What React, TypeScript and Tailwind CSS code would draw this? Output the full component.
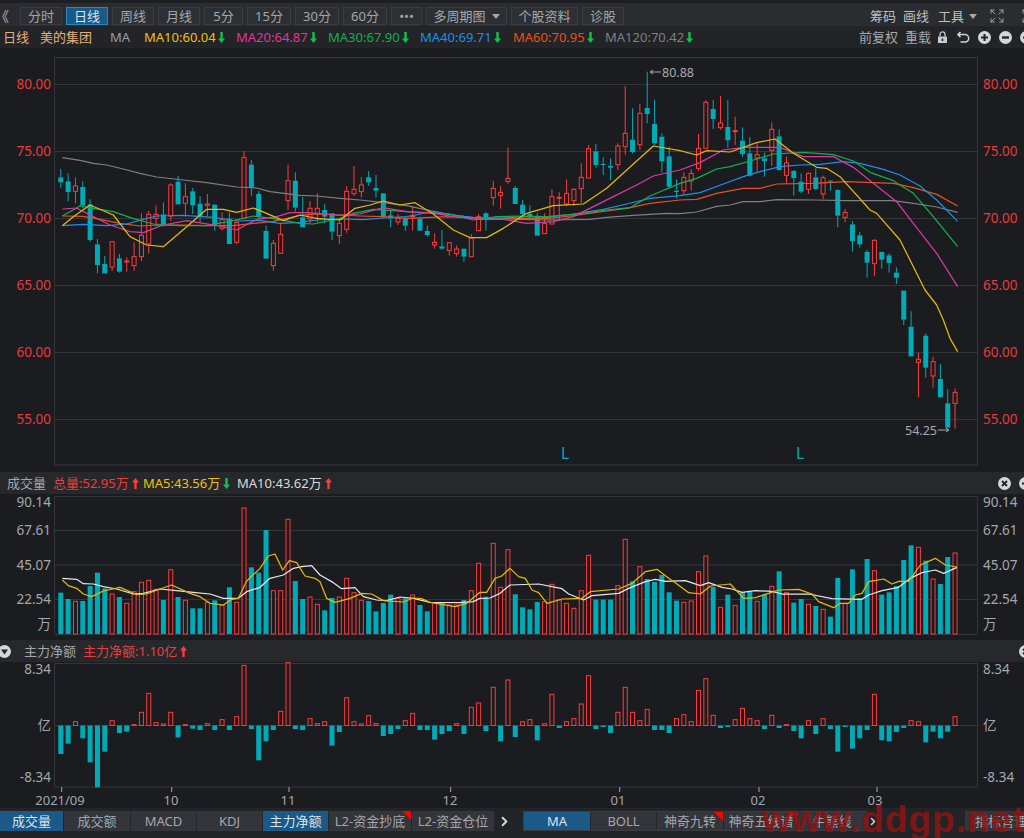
import { ChevronRight, Expand } from "lucide-react";

const RED = "#ff3b3b";
const TEAL = "#00abb8";
const GRID = "#33353a";
const ORANGE = "#e8501e";

type Pt = [number, number];

// x位置
const barX = (i: number) => 60.8 + 7.33 * i;
// 拡大図の座標から画面座標へ
const toY = (z: number) => 60 + z / 3;
const seg = (x0: number, pts: Pt[]) => pts.map(([x, y]) => `${x0 + x / 3},${toY(y)}`).join(" ");

// [赤なら1, 上ヒゲ, 実体上, 実体下, 下ヒゲ]
const candles: number[][] = [
  [0,327,352,367,383],[0,340,364,396,424],[1,352,378,394,430],[0,364,381,437,445],[0,418,433,540,545],[0,537,553,615,640],[0,588,612,640,640],[1,545,545,621,633],[0,582,595,635,638],[1,592,603,606,635],
  [1,547,590,617,633],[1,460,526,590,603],[1,453,463,552,581],[1,436,463,475,500],[0,427,463,495,500],[1,370,375,468,483],[0,348,365,433,433],[1,370,410,430,470],[0,384,394,436,462],[0,408,431,470,487],
  [1,402,432,436,470],[0,433,434,495,512],[1,457,479,505,512],[0,458,476,552,552],[1,483,488,547,552],[1,273,293,475,475],[0,300,314,381,407],[0,393,402,470,475],[0,497,513,596,596],[1,540,550,617,632],
  [1,490,523,580,580],[1,314,362,422,450],[0,337,362,443,455],[0,411,472,502,502],[1,423,445,477,490],[1,400,445,460,487],[0,433,450,470,490],[0,460,460,515,540],[1,475,490,527,552],[1,378,394,508,518],
  [1,318,388,401,408],[1,352,375,395,412],[0,333,352,367,377],[0,345,384,392,412],[0,400,400,470,475],[0,450,466,475,502],[1,462,476,486,495],[0,470,477,497,513],[1,440,467,470,512],[0,470,476,512,512],
  [0,496,513,525,530],[1,520,547,555,566],[0,510,559,566,570],[1,547,548,571,587],[1,557,567,581,590],[0,566,566,590,605],[1,522,534,590,590],[1,462,470,512,512],[0,457,460,472,512],[1,362,385,413,437],
  [1,378,397,406,446],[1,262,355,365,371],[0,378,384,432,432],[0,420,434,462,468],[0,436,462,470,478],[0,460,470,527,527],[1,460,490,521,521],[1,388,410,492,492],[1,397,412,415,480],[1,358,400,432,438],
  [1,385,388,422,438],[1,310,352,386,430],[1,255,266,354,354],[0,252,274,315,323],[0,292,312,315,345],[0,295,318,323,360],[1,250,258,314,330],[1,78,220,260,284],[0,145,239,276,280],[1,132,160,254,270],
  [0,35,144,162,190],[0,120,192,250,255],[0,220,230,304,338],[0,260,289,380,385],[0,358,392,396,416],[1,337,352,392,405],[1,327,340,363,392],[1,222,265,325,332],[1,120,127,265,265],[0,120,147,177,207],
  [1,108,189,203,209],[0,120,201,241,263],[1,170,212,215,255],[0,202,242,282,290],[0,232,280,347,350],[1,250,284,294,335],[0,278,295,303,350],[1,188,208,272,318],[0,208,229,330,332],[1,290,309,346,372],
  [0,330,333,354,407],[0,340,365,395,400],[1,338,340,388,402],[0,325,352,387,390],[1,347,353,402,418],[0,360,362,365,392],[0,388,390,467,502],[1,447,457,472,487],[0,483,493,543,575],[0,516,526,553,563],
  [0,570,576,608,653],[1,538,541,611,648],[0,575,576,599,626],[0,580,586,609,638],[0,622,638,653,672],[0,692,692,779,795],[0,754,800,889,889],[1,878,898,907,1012],[0,820,827,923,953],[1,890,905,948,983],
  [0,912,957,1012,1012],[0,988,1030,1103,1105],[1,985,997,1030,1106],
];

// 棒の上端 (負は赤)
const volumes = [
  368,387,-394,393,348,308,355,-372,381,-400,-365,-337,-331,-358,390,-299,381,-391,415,415,
  -397,391,-406,352,-397,-114,292,308,180,-362,-362,-148,333,387,-381,-403,421,384,-381,-325,
  -368,-391,393,424,399,374,-385,385,-375,405,424,-398,398,-405,-405,390,-362,-280,380,-220,
  -352,-239,373,412,418,396,-395,-343,-390,-400,-415,-362,-256,389,389,389,-347,-208,334,-290,
  327,336,315,367,392,-397,-393,-305,-258,351,-412,374,-406,367,364,-394,374,-349,304,-368,
  398,387,-403,408,-418,440,324,-400,298,385,267,-302,374,367,348,270,226,-232,272,-327,
  342,261,-249,
];

const netAmounts = [
  342,311,-245,295,367,442,335,-242,279,275,-254,-217,-160,-248,-252,-217,292,-254,266,270,
  -251,270,-239,270,-230,-76,267,361,304,270,-214,-68,267,270,-236,-251,-245,317,276,-173,
  -245,-252,-227,-251,288,282,267,-242,-220,270,270,299,282,273,-251,282,-202,-189,273,-142,
  304,-120,291,-245,-239,301,-251,-163,264,-245,-236,-192,-107,267,261,279,-217,-142,-217,-242,
  -208,270,270,279,-236,-224,-245,-151,-116,-226,264,261,-239,-205,-236,-242,267,-226,264,-254,
  273,295,-242,282,-236,267,335,261,326,295,270,-163,301,304,276,264,-242,-245,307,275,
  295,275,-230,
];

const ma120 = [
  seg(0, [[187,293],[240,301],[280,310],[320,315],[370,327],[420,340],[470,351],[550,360],[620,368],[710,381],[770,384],[810,395],[900,406],[950,408],[1020,415]]),
  seg(340, [[60,420],[130,428],[200,437],[270,452],[340,465],[400,473],[470,476],[540,478],[620,480],[750,478],[800,472],[880,466],[980,460],[1020,461]]),
  seg(680, [[50,456],[110,439],[150,435],[190,425],[240,425],[290,419],[400,420],[500,422],[640,422],[700,430],[770,441],[833,457]]),
].join(" ");
const ma60 = [
  seg(0, [[187,468],[250,469],[300,478],[360,490],[420,498],[470,495],[550,495],[620,497],[700,497],[760,490],[820,484],[900,466],[950,462],[1020,465]]),
  seg(340, [[60,468],[130,470],[200,475],[270,472],[330,470],[400,474],[470,474],[540,475],[620,476],[700,467],[790,454],[860,445],[930,430],[1020,420]]),
  seg(680, [[50,418],[110,400],[190,385],[240,385],[290,372],[400,370],[500,365],[640,370],[700,383],[770,403],[833,438]]),
].join(" ");
const ma40 = [
  seg(0, [[187,497],[250,493],[320,497],[380,492],[430,478],[470,468],[550,466],[640,472],[710,483],[780,481],[840,490],[900,487],[950,480],[1020,477]]),
  seg(340, [[70,479],[130,474],[200,470],[270,456],[340,465],[420,475],[490,474],[560,470],[620,472],[700,462],[790,448],[860,432],[930,415],[1020,407]]),
  seg(680, [[60,398],[130,372],[190,350],[240,335],[300,320],[360,315],[420,313],[490,305],[540,310],[610,328],[660,345],[720,378],[770,420],[833,484]]),
].join(" ");
const ma30 = [
  seg(0, [[187,468],[240,438],[280,445],[340,455],[400,476],[460,492],[540,497],[620,497],[700,482],[760,468],[820,476],[900,490],[940,492],[1020,475]]),
  seg(340, [[40,460],[100,448],[160,452],[240,458],[330,462],[400,480],[470,470],[540,468],[620,470],[700,463],[800,450],[870,443],[930,408],[1020,370]]),
  seg(680, [[50,355],[110,327],[150,320],[210,303],[280,282],[370,277],[460,284],[520,303],[570,337],[640,362],[700,400],[760,470],[833,560]]),
].join(" ");
const ma20 = [
  seg(0, [[187,447],[230,444],[280,470],[330,495],[390,515],[430,518],[490,495],[560,482],[610,490],[660,498],[710,510],[770,478],[830,470],[870,458],[920,458],[1020,466]]),
  seg(340, [[60,462],[130,443],[200,455],[270,458],[340,470],[420,478],[490,478],[560,490],[640,485],[700,470],[760,440],[820,410],[890,375],[940,348],[1020,330]]),
  seg(680, [[60,308],[130,270],[190,262],[300,262],[370,290],[460,290],[520,322],[580,370],[650,425],[700,490],[770,580],[833,680]]),
].join(" ");
const ma10 = [
  seg(0, [[187,497],[220,470],[270,435],[340,465],[390,530],[440,555],[490,560],[560,500],[620,448],[670,448],[710,457],[760,444],[800,460],[850,482],[900,465],[950,475],[1020,480]]),
  seg(340, [[45,445],[90,435],[130,423],[180,435],[225,428],[280,462],[340,510],[390,533],[440,533],[490,505],[560,460],[640,437],[730,432],[800,385],[880,312],[940,258],[1020,272]]),
  seg(680, [[50,285],[80,272],[150,276],[230,248],[285,237],[340,280],[410,322],[440,325],[480,350],[570,450],[590,460],[660,540],[735,690]]),
  seg(780, [[470,735],[490,780],[510,835],[533,875]]),
].join(" ");

// 出来高の移動平均 (y = 470 + z / 3)
const volSeg = (x0: number, pts: Pt[]) => pts.map(([x, y]) => `${x0 + x / 3},${470 + y / 3}`).join(" ");
const volWhite = [
  volSeg(0, [[187,325],[230,328],[250,341],[280,342],[310,350],[350,357],[400,372],[430,370],[480,357],[530,362],[580,367],[630,372],[670,385],[715,385],[740,365],[780,352],[810,325],[850,315],[880,295],[905,290],[935,287],[960,315],[1000,338],[1025,356],[1065,353],[1090,380],[1130,390],[1160,392],[1200,381],[1240,385],[1290,397],[1380,398],[1420,395],[1440,385],[1470,384],[1500,370],[1530,345]]),
  volSeg(512, [[80,342],[150,356],[170,372],[215,390],[240,377],[320,370],[350,355],[400,335],[430,328],[460,334],[520,332],[565,347],[590,338],[630,352],[660,357],[690,367],[730,362],[780,364],[810,372],[890,372],[960,386],[1050,388],[1070,375],[1110,362],[1160,352],[1195,325],[1230,308],[1270,300],[1295,310],[1335,292]]),
].join(" ");
const volYellow = [
  volSeg(0, [[187,330],[205,347],[230,355],[250,372],[275,380],[310,363],[360,352],[410,374],[440,372],[480,357],[515,345],[570,370],[600,380],[630,400],[670,405],[695,388],[715,385],[740,333],[780,295],[805,258],[825,252],[848,300],[868,272],[890,278],[915,318],[945,325],[960,335],[980,385],[1005,397],[1050,385],[1085,370],[1115,372],[1150,392],[1210,396],[1240,384],[1265,386],[1290,397],[1365,410],[1400,400],[1440,367],[1460,367],[1485,325],[1505,318],[1530,295]]),
  volSeg(512, [[20,320],[40,325],[60,360],[80,368],[105,400],[150,387],[210,385],[235,365],[320,357],[360,340],[400,305],[435,298],[470,325],[490,338],[530,368],[565,372],[595,348],[655,342],[695,385],[730,383],[800,360],[860,358],[900,372],[920,395],[965,413],[985,400],[1010,400],[1030,375],[1050,370],[1070,335],[1115,327],[1140,342],[1160,334],[1190,334],[1225,285],[1270,265],[1300,285],[1335,291]]),
].join(" ");

const toolButtons = [
  { label: "分时", w: "w-[42px]" },
  { label: "日线", w: "w-[42px]", active: true },
  { label: "周线", w: "w-[42px]" },
  { label: "月线", w: "w-[42px]" },
  { label: "5分", w: "w-[39px]" },
  { label: "15分", w: "w-[44px]" },
  { label: "30分", w: "w-[44px]" },
  { label: "60分", w: "w-[44px]" },
  { label: "•••", w: "w-[31px]" },
];

const maLabels = [
  { text: "MA10:60.04", color: "text-[#f2c200]", w: "w-[92px]" },
  { text: "MA20:64.87", color: "text-[#e2339c]", w: "w-[92px]" },
  { text: "MA30:67.90", color: "text-[#12b04f]", w: "w-[92px]" },
  { text: "MA40:69.71", color: "text-[#1c8fe6]", w: "w-[93px]" },
  { text: "MA60:70.95", color: "text-[#e8501e]", w: "w-[92px]" },
];

const leftTabs = [
  { label: "成交量", w: "w-[64px]", active: true },
  { label: "成交额", w: "w-[67px]" },
  { label: "MACD", w: "w-[66px]" },
  { label: "KDJ", w: "w-[66px]" },
  { label: "主力净额", w: "w-[66px]", active: true },
  { label: "L2-资金抄底", w: "w-[83px]", flag: true },
  { label: "L2-资金仓位", w: "w-[83px]" },
];

const rightTabs = [
  { label: "MA", w: "w-[67px]", active: true },
  { label: "BOLL", w: "w-[66px]" },
  { label: "神奇九转", w: "w-[67px]", flag: true },
  { label: "神奇五线谱", w: "w-[75px]", flag: true },
  { label: "牛熊线", w: "w-[67px]" },
];

const Arrow = ({ up, className }: { up?: boolean; className?: string }) => (
  <svg width="7" height="11" viewBox="0 0 7 11" className={className}>
    <path d={up ? "M3.5 0 L7 4.5 H4.7 V11 H2.3 V4.5 H0 Z" : "M2.3 0 H4.7 V6.5 H7 L3.5 11 L0 6.5 H2.3 Z"} fill={up ? RED : "#12c050"} />
  </svg>
);

const CircleIcon = ({ type }: { type: "plus" | "minus" | "close" | "down" }) => (
  <svg width="13" height="13" viewBox="0 0 13 13" className="shrink-0">
    <circle cx="6.5" cy="6.5" r="6.5" fill="#d4d6d8" />
    {type === "plus" && <path d="M6.5 3 V10 M3 6.5 H10" stroke="#222427" strokeWidth="2" />}
    {type === "minus" && <path d="M3 6.5 H10" stroke="#222427" strokeWidth="2.4" />}
    {type === "close" && <path d="M4 4 L9 9 M9 4 L4 9" stroke="#222427" strokeWidth="1.8" />}
    {type === "down" && <path d="M3 4.5 H10 L6.5 9.5 Z" fill="#222427" />}
  </svg>
);

const GridLines = ({ ys }: { ys: number[] }) => (
  <>
    {ys.map((y) => (
      <line key={y} x1={54.5} x2={977.5} y1={y} y2={y} stroke={GRID} />
    ))}
  </>
);

const AxisText = ({ y, text, fill }: { y: number; text: string; fill: string }) => (
  <>
    <text x={51} y={y + 4.5} textAnchor="end" fontSize="13.5" fill={fill}>{text}</text>
    <text x={983} y={y + 4.5} fontSize="13.5" fill={fill}>{text}</text>
  </>
);

const Tab = ({ label, w, active, flag }: { label: string; w: string; active?: boolean; flag?: boolean }) => (
  <div
    className={`relative flex h-full shrink-0 items-center justify-center border-r border-[#24262a] ${w} ${
      active ? "bg-[#1b5a88] text-[#d8e4ee]" : "bg-[#33353a] text-[#a4a7ab]"
    }`}
  >
    {label}
    {flag && <span className="absolute right-0 top-0 h-0 w-0 border-l-[9px] border-t-[9px] border-l-transparent border-t-[#ff0000]" />}
  </div>
);

export default function App() {
  return (
    <div className="relative h-[838px] w-[1024px] overflow-hidden bg-[#1b1c20] font-['Noto_Sans','Noto_Sans_CJK_SC',sans-serif] text-[13px] leading-none text-[#a4a7ab]">
      {/* ツールバー */}
      <div className="flex h-[26px] items-start border-t-[3px] border-[#1e1f22] bg-[#2a2c30] pt-[4px]">
        <div className="ml-[-5px] flex h-[18px] w-[25px] items-center text-[14px] text-[#b0b3b6]">《</div>
        <div className="flex gap-[4px]">
          {toolButtons.map((b) => (
            <div
              key={b.label}
              className={`flex h-[18px] items-center justify-center border ${b.w} ${
                b.active ? "border-[#2586c8] bg-[#1b5a88] text-[#d8e4ee]" : "border-[#393b40] bg-[#2d2f33]"
              }`}
            >
              {b.label}
            </div>
          ))}
          <div className="flex h-[18px] w-[81px] items-center justify-center gap-[6px] border border-[#393b40] bg-[#2d2f33]">
            多周期图
            <span className="h-0 w-0 border-x-[4px] border-t-[5px] border-x-transparent border-t-[#a4a7ab]" />
          </div>
          <div className="flex h-[18px] w-[67px] items-center justify-center border border-[#393b40] bg-[#2d2f33]">个股资料</div>
          <div className="flex h-[18px] w-[42px] items-center justify-center border border-[#393b40] bg-[#2d2f33]">诊股</div>
        </div>
        <div className="ml-auto flex h-[18px] items-center text-[#bcc0c4]">
          <span>筹码</span>
          <span className="ml-[7px]">画线</span>
          <span className="ml-[9px]">工具</span>
          <span className="ml-[5px] h-0 w-0 border-x-[4px] border-t-[5px] border-x-transparent border-t-[#a4a7ab]" />
          <Expand size={16} strokeWidth={1.4} className="ml-[12px] text-[#a4a7ab]" />
          <Expand size={16} strokeWidth={1.4} className="ml-[16px] mr-[-13px] text-[#a4a7ab]" />
        </div>
      </div>

      {/* 指標ライン */}
      <div className="flex h-[22px] items-center bg-[#222427] whitespace-nowrap">
        <span className="ml-[3px] w-[37px] text-[#e3b27a]">日线</span>
        <span className="w-[70px] text-[#e3b27a]">美的集团</span>
        <span className="w-[34px] text-[#9a9da1]">MA</span>
        {maLabels.map((m) => (
          <span key={m.text} className={`flex items-center gap-[2px] ${m.w} ${m.color}`}>
            {m.text}
            <Arrow />
          </span>
        ))}
        <span className="flex items-center gap-[2px] text-[#7d8084]">
          MA120:70.42
          <Arrow />
        </span>
        <div className="ml-auto mr-[-9px] flex items-center text-[#a4a7ab]">
          <span>前复权</span>
          <span className="ml-[7px]">重载</span>
          <svg width="11" height="12" viewBox="0 0 11 12" className="ml-[6px]">
            <path d="M3 5.5 V3.4 A2.5 2.5 0 0 1 8 3.4 V5.5" fill="none" stroke="#c8cacc" strokeWidth="1.3" />
            <rect x="1" y="5.5" width="9" height="6.5" fill="#c8cacc" />
            <rect x="4.7" y="7.5" width="1.6" height="2.5" fill="#222427" />
          </svg>
          <svg width="13" height="13" viewBox="0 0 13 13" className="ml-[9px]">
            <path d="M3.5 1 L1 3.6 L3.5 6.2 M1 3.6 H8 A3.7 3.7 0 0 1 8 11 H3.5" fill="none" stroke="#d4d6d8" strokeWidth="1.5" />
          </svg>
          <span className="ml-[8px]"><CircleIcon type="plus" /></span>
          <span className="ml-[8px]"><CircleIcon type="minus" /></span>
          <span className="ml-[8px]"><CircleIcon type="plus" /></span>
        </div>
      </div>

      {/* K線 */}
      <svg width="1024" height="424" viewBox="0 48 1024 424" className="block">
        <path d="M54.5 57.5 H977.5 V465 H54.5 Z" fill="none" stroke={GRID} />
        <GridLines ys={[84.5, 151.5, 218.5, 285.5, 352.5, 419.5]} />
        {[["80.00", 84.5], ["75.00", 151.5], ["70.00", 218.5], ["65.00", 285.5], ["60.00", 352.5], ["55.00", 419.5]].map(([t, y]) => (
          <AxisText key={t as string} y={y as number} text={t as string} fill="#e83a3a" />
        ))}
        {candles.map(([up, wt, bt, bb, wb], i) => {
          const x = barX(i);
          const color = up ? RED : TEAL;
          return (
            <g key={i}>
              <line x1={x} x2={x} y1={toY(wt)} y2={toY(bt)} stroke={color} />
              <line x1={x} x2={x} y1={toY(bb)} y2={toY(wb)} stroke={color} />
              {up ? (
                <rect x={x - 2} y={toY(bt)} width={4} height={toY(bb) - toY(bt)} fill="none" stroke={color} />
              ) : (
                <rect x={x - 2.5} y={toY(bt)} width={5} height={Math.max(toY(bb) - toY(bt), 1)} fill={color} />
              )}
            </g>
          );
        })}
        <g fill="none" strokeLinejoin="round">
          <polyline points={ma120} stroke="#7d7f82" strokeWidth="1.25" />
          <polyline points={ma60} stroke={ORANGE} strokeWidth="1.25" />
          <polyline points={ma40} stroke="#1c8fe6" strokeWidth="1.25" />
          <polyline points={ma30} stroke="#12b04f" strokeWidth="1.25" />
          <polyline points={ma20} stroke="#d93aa0" strokeWidth="1.25" />
          <polyline points={ma10} stroke="#e6b800" strokeWidth="1.25" />
        </g>
        <path d="M650 72 H661 M650 72 L653 70 M650 72 L653 74" stroke="#a8aaad" fill="none" />
        <text x={662} y={76.5} fontSize="12.5" fill="#a8aaad">80.88</text>
        <text x={905} y={435} fontSize="12.5" fill="#a8aaad">54.25</text>
        <path d="M938 430 H949 M949 430 L946 428 M949 430 L946 432" stroke="#a8aaad" fill="none" />
        <text x={561} y={459} fontSize="15.5" fill={TEAL}>L</text>
        <text x={796} y={459} fontSize="15.5" fill={TEAL}>L</text>
      </svg>

      {/* 成交量 */}
      <div className="flex h-[22px] items-center bg-[#26282b] whitespace-nowrap">
        <span className="ml-[7px] w-[46px]">成交量</span>
        <span className="flex w-[90px] items-center gap-[3px] text-[#f03c3c]">总量:52.95万<Arrow up /></span>
        <span className="flex w-[94px] items-center gap-[3px] text-[#f2c200]">MA5:43.56万<Arrow /></span>
        <span className="flex items-center gap-[3px] text-[#d8dadc]">MA10:43.62万<Arrow up /></span>
        <span className="ml-auto"><CircleIcon type="close" /></span>
        <span className="ml-[8px] mr-[-8px]"><CircleIcon type="plus" /></span>
      </div>
      <svg width="1024" height="146" viewBox="0 494 1024 146" className="block">
        <path d="M54.5 496.5 H977.5 V634.5 H54.5 Z" fill="none" stroke={GRID} />
        <GridLines ys={[530.5, 565, 599.5]} />
        {[["90.14", 502], ["67.61", 530], ["45.07", 565], ["22.54", 599], ["万", 624]].map(([t, y]) => (
          <AxisText key={t as string} y={y as number} text={t as string} fill="#a4a7ab" />
        ))}
        {volumes.map((v, i) => {
          const x = barX(i);
          const top = 470 + Math.abs(v) / 3;
          return v < 0 ? (
            <rect key={i} x={x - 2} y={top} width={4} height={634 - top} fill="#1b1c20" stroke={RED} />
          ) : (
            <rect key={i} x={x - 2.5} y={top} width={5} height={634 - top} fill={TEAL} />
          );
        })}
        <polyline points={volWhite} fill="none" stroke="#e4e6e8" strokeWidth="1.25" strokeLinejoin="round" />
        <polyline points={volYellow} fill="none" stroke="#e6b800" strokeWidth="1.25" strokeLinejoin="round" />
      </svg>

      {/* 主力净额 */}
      <div className="flex h-[22px] items-center bg-[#26282b] whitespace-nowrap">
        <span className="ml-[-2px]"><CircleIcon type="down" /></span>
        <span className="ml-[13px] w-[59px]">主力净额</span>
        <span className="flex items-center gap-[3px] text-[#f03c3c]">主力净额:1.10亿<Arrow up /></span>
        <span className="ml-auto mr-[-8px]"><CircleIcon type="close" /></span>
      </div>
      <svg width="1024" height="146" viewBox="0 662 1024 146" className="block overflow-visible">
        <path d="M54.5 663.5 H977.5 V787 H54.5 Z" fill="none" stroke={GRID} />
        <line x1={54.5} x2={977.5} y1={725.5} y2={725.5} stroke={GRID} />
        {[["8.34", 669], ["亿", 725], ["-8.34", 777]].map(([t, y]) => (
          <AxisText key={t as string} y={y as number} text={t as string} fill="#a4a7ab" />
        ))}
        {netAmounts.map((v, i) => {
          const x = barX(i);
          const end = 640 + Math.abs(v) / 3;
          const top = Math.min(end, 725.5);
          const h = Math.abs(end - 725.5);
          return v < 0 ? (
            <rect key={i} x={x - 2} y={top} width={4} height={h} fill="none" stroke={RED} />
          ) : (
            <rect key={i} x={x - 2.5} y={top} width={5} height={h} fill={TEAL} />
          );
        })}
        {[
          { x: 61.7, text: "2021/09", tx: 60 },
          { x: 171.7, text: "10", tx: 171 },
          { x: 289, text: "11", tx: 288 },
          { x: 450.7, text: "12", tx: 450 },
          { x: 619.7, text: "01", tx: 618 },
          { x: 759, text: "02", tx: 758 },
          { x: 877, text: "03", tx: 875 },
        ].map((t) => (
          <g key={t.text}>
            <line x1={t.x} x2={t.x} y1={787} y2={792} stroke="#a4a7ab" />
            <text x={t.tx} y={805} textAnchor="middle" fontSize="13" fill="#a4a7ab">{t.text}</text>
          </g>
        ))}
      </svg>

      {/* 下部タブ */}
      <div className="flex h-[30px] items-start bg-[#222427] pt-[3px] whitespace-nowrap">
        <div className="flex h-[20px] shrink-0">
          {leftTabs.map((t) => (
            <Tab key={t.label} {...t} />
          ))}
        </div>
        <span className="flex h-[20px] w-[28px] shrink-0 items-center pl-[2px] text-[#d4d6d8]">
          <ChevronRight size={15} strokeWidth={3} />
        </span>
        <div className="flex h-[20px] shrink-0 border border-[#3a3c40]">
          {rightTabs.map((t) => (
            <Tab key={t.label} {...t} />
          ))}
        </div>
        <span className="flex h-[20px] w-[12px] shrink-0 items-center justify-center text-[#d4d6d8]">
          <ChevronRight size={15} strokeWidth={3} />
        </span>
        <span className="ml-[86px] flex h-[20px] w-[80px] shrink-0 items-center bg-[#33353a] pl-[10px]">指标管理</span>
      </div>

      {/* 透かし */}
      <span className="absolute left-[762px] top-[799px] font-['Liberation_Sans',sans-serif] text-[37px] font-bold leading-[42px] tracking-[1px] text-[#8e1414]/85">
        www.ddgp.net
      </span>
    </div>
  );
}
